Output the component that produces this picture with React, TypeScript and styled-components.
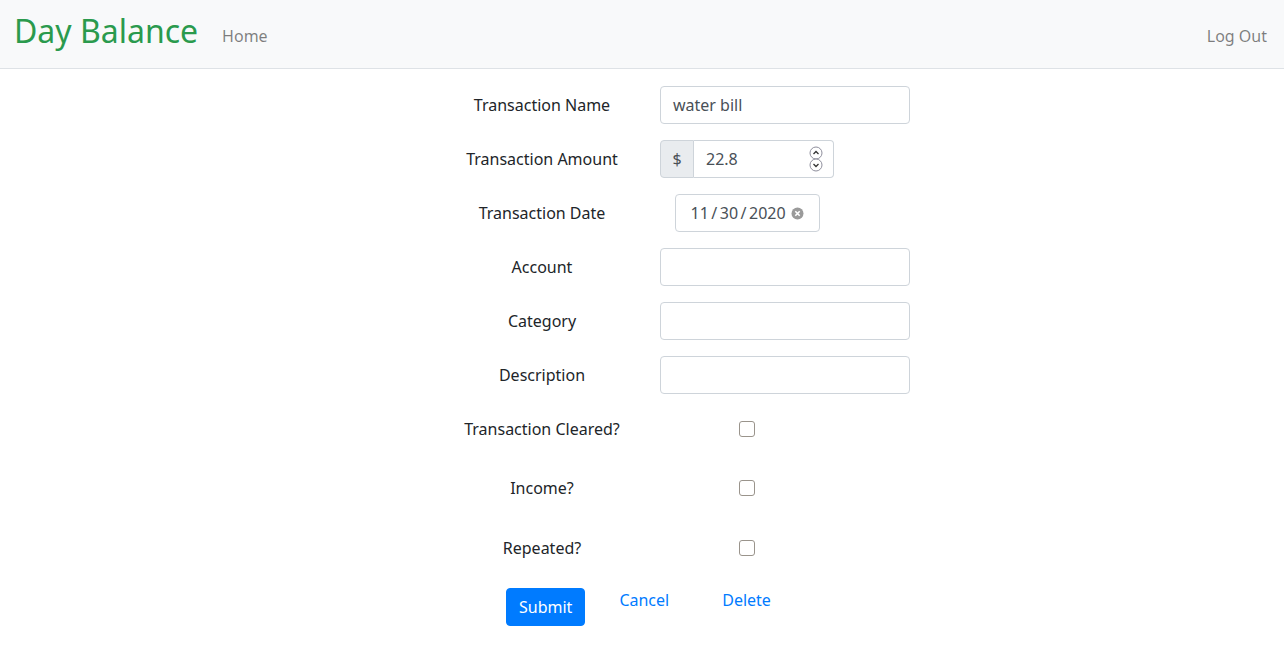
import React from "react";
import styled, { createGlobalStyle } from "styled-components";

const Global = createGlobalStyle`
  html, body { margin: 0; padding: 0; background: #fff; }
  body {
    font-family: "Noto Sans", "Open Sans", sans-serif;
    font-size: 16px;
    line-height: 1.5;
    color: #212529;
  }
  * { box-sizing: border-box; }
`;

const Nav = styled.nav`
  height: 69px;
  background: #f8f9fa;
  border-bottom: 1px solid #dee2e6;
  display: flex;
  align-items: center;
  padding: 0 17px 0 14px;
`;

const Brand = styled.a`
  font-size: 32px;
  line-height: 1;
  color: #2a9a4d;
  text-decoration: none;
  margin-right: 24px;
  padding-bottom: 6px;
`;

const NavLink = styled.a<{ $right?: boolean }>`
  color: rgba(0, 0, 0, 0.5);
  font-size: 16px;
  text-decoration: none;
  margin-left: ${(p) => (p.$right ? "auto" : "0")};
  padding-top: 3px;
`;

const Form = styled.form`
  margin: 17px 0 0 calc(50% - 200px);
  width: 480px;
`;

const Row = styled.div<{ $h?: number; $mb?: number }>`
  display: grid;
  grid-template-columns: 200px 174px;
  column-gap: 18px;
  align-items: center;
  height: ${(p) => p.$h ?? 38}px;
  margin-bottom: ${(p) => p.$mb ?? 16}px;
`;

const Label = styled.label`
  text-align: center;
  font-size: 16px;
`;

const Cell = styled.div<{ $center?: boolean }>`
  display: flex;
  justify-content: ${(p) => (p.$center ? "center" : "flex-start")};
  align-items: center;
`;

const TextInput = styled.div`
  width: 250px;
  flex: none;
  height: 38px;
  border: 1px solid #ced4da;
  border-radius: 4px;
  padding: 6px 12px;
  color: #495057;
  background: #fff;
  white-space: nowrap;
`;

const Group = styled.div`
  display: flex;
  width: 174px;
  height: 38px;
`;

const Prepend = styled.span`
  width: 34px;
  background: #e9ecef;
  border: 1px solid #ced4da;
  border-radius: 4px 0 0 4px;
  color: #495057;
  display: flex;
  align-items: center;
  justify-content: center;
`;

const NumberBox = styled.div`
  flex: 1;
  border: 1px solid #ced4da;
  border-left: none;
  border-radius: 0 4px 4px 0;
  padding: 6px 12px;
  color: #495057;
  display: flex;
  align-items: center;
  justify-content: space-between;
`;

const DateBox = styled.div`
  width: 145px;
  height: 38px;
  border: 1px solid #ced4da;
  border-radius: 4px;
  padding: 6px 0 6px 15px;
  color: #495057;
  display: flex;
  align-items: center;
  white-space: nowrap;
`;

const Slash = styled.span`
  margin: 0 2.5px;
`;

const ClearWrap = styled.span`
  display: flex;
  margin-left: 5px;
`;

const Check = styled.span`
  width: 16px;
  height: 16px;
  border: 1px solid #9a948c;
  border-radius: 3px;
  background: #fff;
  display: block;
`;

const ButtonRow = styled.div`
  display: flex;
  align-items: flex-start;
  margin-top: 13px;
  padding-left: 64px;
`;

const Primary = styled.button`
  margin-top: 7px;
  height: 38px;
  padding: 6px 12px;
  font: inherit;
  color: #fff;
  background: #007bff;
  border: 1px solid #007bff;
  border-radius: 4px;
`;

const LinkBtn = styled.button<{ $ml: number }>`
  height: 38px;
  padding: 6px 12px;
  margin-left: ${(p) => p.$ml}px;
  font: inherit;
  color: #007bff;
  background: transparent;
  border: 1px solid transparent;
`;

const Spinner = () => (
  <svg width="14" height="26" viewBox="0 0 14 26" style={{ marginRight: -2 }}>
    <rect x="1" y="1" width="12" height="12" rx="6" fill="#fff" stroke="#8f8f9d" />
    <rect x="1" y="13" width="12" height="12" rx="6" fill="#fff" stroke="#8f8f9d" />
    <path d="M4.5 8 L7 5.5 L9.5 8" fill="none" stroke="#333" strokeWidth="1.3" />
    <path d="M4.5 18 L7 20.5 L9.5 18" fill="none" stroke="#333" strokeWidth="1.3" />
  </svg>
);

const Clear = () => (
  <svg width="13" height="13" viewBox="0 0 13 13">
    <circle cx="6.5" cy="6.5" r="6" fill="#9a9a9a" />
    <path d="M4.3 4.3 L8.7 8.7 M8.7 4.3 L4.3 8.7" stroke="#fff" strokeWidth="1.6" />
  </svg>
);

export default function App() {
  return (
    <>
      <Global />
      <Nav>
        <Brand href="#">Day Balance</Brand>
        <NavLink href="#">Home</NavLink>
        <NavLink href="#" $right>
          Log Out
        </NavLink>
      </Nav>
      <Form onSubmit={(e) => e.preventDefault()}>
        <Row>
          <Label>Transaction Name</Label>
          <Cell>
            <TextInput>water bill</TextInput>
          </Cell>
        </Row>
        <Row>
          <Label>Transaction Amount</Label>
          <Cell>
            <Group>
              <Prepend>$</Prepend>
              <NumberBox>
                <span>22.8</span>
                <Spinner />
              </NumberBox>
            </Group>
          </Cell>
        </Row>
        <Row>
          <Label>Transaction Date</Label>
          <Cell $center>
            <DateBox>
              <span>11</span>
              <Slash>/</Slash>
              <span>30</span>
              <Slash>/</Slash>
              <span>2020</span>
              <ClearWrap>
                <Clear />
              </ClearWrap>
            </DateBox>
          </Cell>
        </Row>
        <Row>
          <Label>Account</Label>
          <Cell>
            <TextInput />
          </Cell>
        </Row>
        <Row>
          <Label>Category</Label>
          <Cell>
            <TextInput />
          </Cell>
        </Row>
        <Row $mb={15}>
          <Label>Description</Label>
          <Cell>
            <TextInput />
          </Cell>
        </Row>
        <Row $h={40} $mb={19}>
          <Label>Transaction Cleared?</Label>
          <Cell $center>
            <Check />
          </Cell>
        </Row>
        <Row $h={40} $mb={20}>
          <Label>Income?</Label>
          <Cell $center>
            <Check />
          </Cell>
        </Row>
        <Row $h={40} $mb={0}>
          <Label>Repeated?</Label>
          <Cell $center>
            <Check />
          </Cell>
        </Row>
        <ButtonRow>
          <Primary type="submit">Submit</Primary>
          <LinkBtn type="button" $ml={21}>
            Cancel
          </LinkBtn>
          <LinkBtn type="button" $ml={27}>
            Delete
          </LinkBtn>
        </ButtonRow>
      </Form>
    </>
  );
}
